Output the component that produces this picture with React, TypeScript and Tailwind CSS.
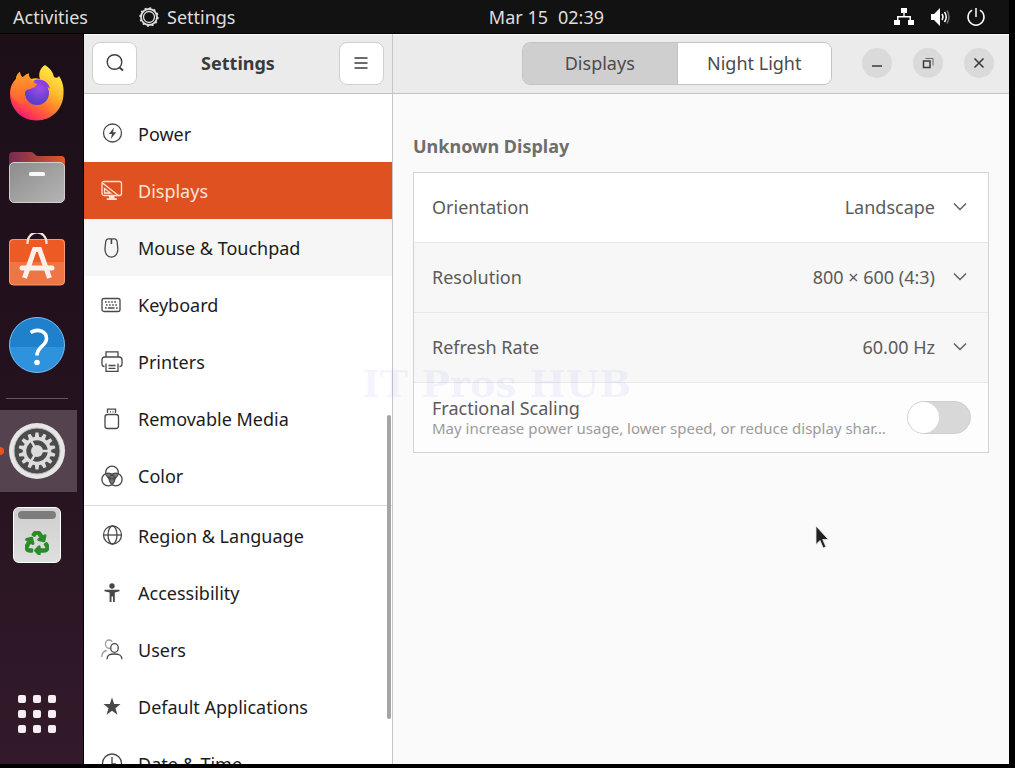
import type { ReactNode } from "react";
import { FaRecycle } from "react-icons/fa";

const iconProps = {
  viewBox: "0 0 22 22",
  className: "size-[22px] shrink-0",
  fill: "none",
  stroke: "currentColor",
  strokeWidth: 1.3,
  "aria-hidden": true,
};

const PowerIcon = () => (
  <svg {...iconProps}>
    <circle cx="11.5" cy="10" r="9" />
    <path d="M13 4.5 7.8 11h3.1l-1 5 5.3-6.7h-3.2z" fill="currentColor" stroke="none" />
  </svg>
);

const DisplaysIcon = () => (
  <svg {...iconProps}>
    <rect x="1" y="1.5" width="19.5" height="14" rx="2" />
    <path d="M1.5 3 17 15.3M3.5 8.5v4.5h6z" />
    <path d="M8 15.5h5.5v2.7h2.3V20H5.8v-1.8H8z" fill="currentColor" stroke="none" />
  </svg>
);

const MouseIcon = () => (
  <svg {...iconProps}>
    <path d="M7.5 1.8h5.8c2 0 2.6 1.2 2.8 3l.7 6.5c.4 5-2.3 8.8-6.4 8.8S3.6 16.3 4 11.3l.7-6.5c.2-1.8.8-3 2.8-3z" />
    <path d="M10.4 2v5" strokeWidth="1.6" />
  </svg>
);

const KeyboardIcon = () => (
  <svg {...iconProps}>
    <rect x="1" y="4.5" width="18" height="13" rx="2" />
    <path d="M4 8h12.500M5 11h11" strokeDasharray="1.6 1.5" />
    <path d="M4 14h1.7M7 14h6.5M15 14h1.7" strokeWidth="1.5" />
  </svg>
);

const PrinterIcon = () => (
  <svg {...iconProps}>
    <path d="M5 6V.8h12V6M3.500 15.500C1.700 15.500 1 14.500 1 13V9c0-2 1-3 3-3h14c2 0 3 1 3 3v4c0 1.500-.7 2.500-2.500 2.500" />
    <path d="M5 12.500V20.300h12v-7.800M7.500 14.500h7M7.500 17.300h7" />
  </svg>
);

const MediaIcon = () => (
  <svg {...iconProps}>
    <rect x="4" y="6.5" width="13.5" height="14" rx="2.5" />
    <path d="M6.500 5V1.200h8V5M9 3.800h1M11.500 3.800h1" />
  </svg>
);

const ColorIcon = () => (
  <svg {...iconProps}>
    <path d="M5.500 8.500h11l-2 6.500-3.500 4-3.500-4z" fill="currentColor" stroke="none" opacity=".75" />
    <circle cx="11" cy="7.500" r="6.300" />
    <circle cx="7.200" cy="14.500" r="6.300" />
    <circle cx="14.800" cy="14.500" r="6.300" />
  </svg>
);

const GlobeIcon = () => (
  <svg {...iconProps}>
    <circle cx="11.5" cy="10" r="9" />
    <ellipse cx="11.5" cy="10" rx="4.5" ry="9" />
    <path d="M2.500 10h18" />
  </svg>
);

const AccessibilityIcon = () => (
  <svg {...iconProps} fill="currentColor" stroke="none">
    <circle cx="11" cy="4" r="2.7" />
    <path d="M3.500 7.700h15v1.500L13.800 10.500V20H12v-5.500h-1.500V20H8.600v-9.500L3.500 9.200z" />
  </svg>
);

const UsersIcon = () => (
  <svg {...iconProps}>
    <g opacity=".55">
      <path d="M9 9.500C5.500 9.500 4.500 6.500 4.500 5c0-2.500 1.500-4 3.500-4 1.500 0 2.500.5 3.200 1.800M.8 18c0-4.500 2-6 5-6.500" />
    </g>
    <ellipse cx="13.5" cy="9" rx="3.8" ry="4.3" />
    <path d="M6 20.300c.3-4.300 2.300-5.300 7.300-5.300s7.400 1 7.700 5.300" />
  </svg>
);

const StarIcon = () => (
  <svg {...iconProps} fill="currentColor" stroke="none">
    <path d="M11 1.500 13.200 8h6.300l-5 4.200 1.900 6.500-5.400-3.900-5.400 3.900 1.900-6.500-5-4.200h6.300z" />
  </svg>
);

const ClockIcon = () => (
  <svg {...iconProps}>
    <circle cx="11" cy="10.500" r="9.500" />
    <path d="M11 4v7h4" />
  </svg>
);

const ChevronIcon = () => (
  <svg viewBox="0 0 16 16" className="pointer-events-none size-4" fill="none" stroke="#5e5c5c" strokeWidth="1.4" aria-hidden="true">
    <path d="m2 4.500 6 6 6-6" />
  </svg>
);

const FirefoxLogo = () => (
  <svg viewBox="0 0 56 56" className="size-14" aria-hidden="true">
    <defs>
      <linearGradient id="ffBody" x1="0.85" y1="0.05" x2="0.25" y2="1">
        <stop offset="0" stopColor="#fff04d" />
        <stop offset="0.35" stopColor="#ffbd2e" />
        <stop offset="0.6" stopColor="#ff7a2a" />
        <stop offset="0.85" stopColor="#ff3a54" />
        <stop offset="1" stopColor="#e3127b" />
      </linearGradient>
      <radialGradient id="ffGlobe" cx="0.6" cy="0.3" r="0.75">
        <stop offset="0" stopColor="#a34bea" />
        <stop offset="1" stopColor="#4a3dc4" />
      </radialGradient>
      <linearGradient id="ffHead" x1="0" y1="0" x2="0" y2="1">
        <stop offset="0" stopColor="#ffa02b" />
        <stop offset="1" stopColor="#ff5a33" />
      </linearGradient>
    </defs>
    <path
      d="M36 0c5 3 8 7 9 12 2 1 4 1 5-1 4 6 5 12 4.500 18C54 44 43 55.500 27.500 55.500S1 43.500 1 29c0-8 3-12 6-15 0-3 2-6 4-7 0 2 1 4 2.500 5.500C16 10 18 9 20 8.500c-.5 2 .5 4 2 5.500 3-1 6-1 9 0-2-5 0-11 5-14z"
      fill="url(#ffBody)"
    />
    <circle cx="28" cy="28" r="12" fill="url(#ffGlobe)" />
    <path d="M24 16c8-4 16 1 17 8-3-3-5-3-7-3-1-3-4-5-10-5z" fill="#8b3fe0" />
    <path
      d="M7 14c0-3 2-6 4-7 0 2 1 4 2.500 5.500C16 10 18 9 20 8.500c-.5 3 1 6 4 8.500l4 2c-1 3-4 4-7 5-5 1-6 4-5 7 1 4 3 6 6 8-8 2-17-1-20-10C1 24 4 18 7 14z"
      fill="url(#ffHead)"
    />
  </svg>
);

const FilesLogo = () => (
  <svg viewBox="0 0 56 56" className="size-14" aria-hidden="true">
    <defs>
      <linearGradient id="flTab" x1="0" y1="0" x2="1" y2="0">
        <stop offset="0" stopColor="#752a55" />
        <stop offset="1" stopColor="#e35826" />
      </linearGradient>
      <linearGradient id="flBody" x1="0" y1="0" x2="1" y2="1">
        <stop offset="0" stopColor="#8c8c8c" />
        <stop offset="1" stopColor="#b5b5b5" />
      </linearGradient>
    </defs>
    <path d="M0 25V7q0-4 4-4h18q2 0 3.500 2t4 2H52q4 0 4 4v16z" fill="url(#flTab)" />
    <rect x="0.5" y="13.500" width="55" height="40" rx="4.5" fill="url(#flBody)" stroke="#cfcfcf" />
    <rect x="20" y="23" width="16" height="4" rx="1.5" fill="#f7f7f7" />
  </svg>
);

const SoftwareLogo = () => (
  <svg viewBox="0 0 56 56" className="size-14" aria-hidden="true">
    <path d="M0 10q0-4 4-4h48q4 0 4 4v19H0z" fill="#ee5a24" />
    <path d="M0 29h56v18q0 5-4 5H4q-4 0-4-5z" fill="#ee7544" />
    <rect x="0.5" y="6.500" width="55" height="45.500" rx="4" fill="none" stroke="#f79a73" />
    <path d="M18.500 11V9.500a9.500 10 0 0 1 19 0V11" fill="none" stroke="#f4e5d8" strokeWidth="2.2" />
    <g fill="none" stroke="#fbf1ea" strokeWidth="5">
      <path d="M26 15 15.500 45M30 15l10.500 30" />
      <path d="M13 35h30" strokeLinecap="round" />
    </g>
    <path d="M24 14h8v5h-8z" fill="#fbf1ea" />
  </svg>
);

const HelpLogo = () => (
  <svg viewBox="0 0 56 56" className="size-14" aria-hidden="true">
    <circle cx="28" cy="28" r="27.5" fill="#2f92dc" />
    <path d="M.5 30V28a27.500 27.500 0 0 1 55 0v2z" fill="#1f80cb" />
    <circle cx="28" cy="28" r="27.5" fill="none" stroke="#79bdf0" />
    <path d="M21.500 15.500c8-4.500 16-1 16 6 0 8-9.500 7.500-9.500 17" fill="none" stroke="#fff" strokeWidth="3.6" />
    <circle cx="28" cy="45.500" r="2.8" fill="#fff" />
  </svg>
);

const gearTeeth = Array.from({ length: 14 }, (_, i) => (i * 360) / 14);

const SettingsLogo = () => (
  <svg viewBox="0 0 56 56" className="size-14" aria-hidden="true">
    <circle cx="28" cy="28" r="28" fill="#e6e6e6" />
    <circle cx="28" cy="28" r="23" fill="#4b4b4b" stroke="#bdbdbd" />
    <g fill="#dcdcdc">
      {gearTeeth.map((angle) => (
        <path key={angle} d="M25.700 15 26.500 9.500h3l.8 5.500z" transform={`rotate(${angle} 28 28)`} />
      ))}
      <circle cx="28" cy="28" r="6" />
    </g>
    <circle cx="28" cy="28" r="12.5" fill="none" stroke="#dcdcdc" strokeWidth="3.5" />
    <path d="M28 28h12M28 28l-6-10.400M28 28l-6 10.400" stroke="#dcdcdc" strokeWidth="2.4" />
  </svg>
);

const TrashLogo = () => (
  <span className="flex h-14 w-12 flex-col items-center rounded-md border border-white bg-gradient-to-b from-[#cfcfcf] to-[#dedede] px-1 pt-[3px]">
    <span className="h-2 w-full rounded-sm bg-[#7d7d7d]" />
    <FaRecycle className="mt-3 size-6 stroke-[#2c8b2a] stroke-[30] text-[#2c8b2a]" />
  </span>
);

interface DockItemProps {
  label: string;
  children: ReactNode;
  active?: boolean;
}

const DockItem = ({ label, children, active }: DockItemProps) => (
  <button type="button" aria-label={label} className="relative flex h-21 w-full items-center py-px">
    {active && <span className="absolute -left-1 size-2 rounded-full bg-[#e95420]" />}
    <span className={`flex h-full items-center justify-center ${active ? "w-[77px] bg-[#5a4853]/90 pr-[3px]" : "w-[74px]"}`}>
      {children}
    </span>
  </button>
);

const Dock = () => (
  <nav
    aria-label="Dock"
    className="flex w-21 shrink-0 flex-col border-r border-black bg-gradient-to-b from-[#1c0f18] via-[#24121e] to-[#331a2a] pt-[17px] pb-2"
  >
    <DockItem label="Firefox"><FirefoxLogo /></DockItem>
    <DockItem label="Files"><FilesLogo /></DockItem>
    <DockItem label="Software"><SoftwareLogo /></DockItem>
    <DockItem label="Help"><HelpLogo /></DockItem>
    <div className="flex h-[22px] w-[74px] items-center justify-center">
      <span className="h-px w-[62px] bg-[#66555f]" />
    </div>
    <DockItem label="Settings" active><SettingsLogo /></DockItem>
    <DockItem label="Trash"><TrashLogo /></DockItem>
    <div className="mt-auto">
      <DockItem label="Show Applications">
        <span className="grid grid-cols-3 gap-[7px]">
          {gearTeeth.slice(0, 9).map((key) => (
            <span key={key} className="size-2 rounded-xs bg-[#f6eef2]" />
          ))}
        </span>
      </DockItem>
    </div>
  </nav>
);

const TopBar = () => (
  <header className="flex h-[34px] shrink-0 items-center border-b border-black bg-[#121212] text-lg leading-6 text-[#dedede]">
    <div className="flex flex-1 items-center gap-[51px] pl-[13px]">
      <button type="button">Activities</button>
      <button type="button" className="flex items-center gap-2">
        <svg viewBox="0 0 20 20" className="size-5" fill="none" stroke="currentColor" aria-hidden="true">
          <circle cx="10" cy="10" r="8" strokeWidth="1.8" />
          <circle cx="10" cy="10" r="8.8" strokeWidth="1.8" strokeDasharray="2 2.6" />
          <circle cx="10" cy="10" r="5.5" strokeWidth="1.3" />
        </svg>
        Settings
      </button>
    </div>
    <button type="button" className="flex gap-[10px]">
      <span>Mar 15</span>
      <span>02:39</span>
    </button>
    <div className="flex w-[405px] shrink-0 justify-end pr-[23px]">
      <button type="button" aria-label="System menu" className="flex items-center gap-4 text-white">
        <svg viewBox="0 0 20 20" className="size-5" fill="currentColor" aria-hidden="true">
          <path d="M7 1h6v5h-2.300v3H17v4h3v5h-6v-5h1.500v-2.500h-11V13H6v5H0v-5h3V9h6.300V6H7z" />
        </svg>
        <svg viewBox="0 0 20 20" className="size-5" fill="currentColor" aria-hidden="true">
          <path d="M1 7h3l6-6v18l-6-6H1z" />
          <g fill="none" stroke="currentColor" strokeWidth="1.5">
            <path d="M12 7q2 3 0 6M14.500 5q3.500 5 0 10" />
            <path d="M17 3.500q4 6.500 0 13" opacity=".4" />
          </g>
        </svg>
        <svg viewBox="0 0 20 20" className="size-5" fill="none" stroke="currentColor" strokeWidth="1.5" aria-hidden="true">
          <path d="M6 3.200a8 8 0 1 0 8 0M10 1v9" />
        </svg>
      </button>
    </div>
  </header>
);

const mainItems = [
  { label: "Power", icon: PowerIcon },
  { label: "Displays", icon: DisplaysIcon },
  { label: "Mouse & Touchpad", icon: MouseIcon },
  { label: "Keyboard", icon: KeyboardIcon },
  { label: "Printers", icon: PrinterIcon },
  { label: "Removable Media", icon: MediaIcon },
  { label: "Color", icon: ColorIcon },
];

const systemItems = [
  { label: "Region & Language", icon: GlobeIcon },
  { label: "Accessibility", icon: AccessibilityIcon },
  { label: "Users", icon: UsersIcon },
  { label: "Default Applications", icon: StarIcon },
  { label: "Date & Time", icon: ClockIcon },
];

const rowStyles: Record<string, string> = {
  Displays: "bg-[#df5121] text-[#fbe3da]",
  "Mouse & Touchpad": "bg-[#f6f6f6] text-[#1c1c1c]",
};

const SidebarRow = ({ label, icon: Icon }: (typeof mainItems)[number]) => (
  <li>
    <a
      href="#"
      aria-current={label === "Displays" ? "page" : undefined}
      className={`flex h-[57px] items-center gap-[15px] pl-[17px] text-lg leading-6 ${rowStyles[label] ?? "text-[#1c1c1c]"}`}
    >
      <span className={label === "Displays" ? "" : "text-[#484848]"}><Icon /></span>
      {label}
    </a>
  </li>
);

const headerButton = "flex h-[43px] w-[45px] items-center justify-center rounded-lg border border-[#cfcfcf] bg-white text-[#3d3d3d]";

const Sidebar = () => (
  <aside className="flex w-[309px] shrink-0 flex-col border-r border-[#c6c6c6] bg-white">
    <div className="flex h-[60px] shrink-0 items-center justify-between border-t border-b border-t-white border-b-[#c2c2c2] bg-[#ebebeb] px-2 pb-0.5">
      <button type="button" aria-label="Search" className={headerButton}>
        <svg viewBox="0 0 20 20" className="size-5" fill="none" stroke="currentColor" strokeWidth="1.4" aria-hidden="true">
          <circle cx="9.5" cy="9" r="7.3" />
          <path d="m14.500 14.500 3.500 3" strokeWidth="2" />
        </svg>
      </button>
      <h1 className="text-lg leading-6 font-bold text-[#3a3a3a]">Settings</h1>
      <button type="button" aria-label="Menu" className={headerButton}>
        <svg viewBox="0 0 20 20" className="size-5" stroke="currentColor" strokeWidth="1.4" aria-hidden="true">
          <path d="M3.500 5h13M3.500 10h13M3.500 15h13" />
        </svg>
      </button>
    </div>
    <div className="relative min-h-0 flex-1 overflow-hidden pt-[11px]">
      <ul>
        {mainItems.map((item) => <SidebarRow key={item.label} {...item} />)}
      </ul>
      <hr className="my-px border-[#dcdcdc]" />
      <ul>
        {systemItems.map((item) => <SidebarRow key={item.label} {...item} />)}
      </ul>
      <span className="absolute right-px bottom-[45px] h-[304px] w-1 rounded-full bg-[#a5a5a5]" />
    </div>
  </aside>
);

const windowButton = "flex size-[30px] items-center justify-center rounded-full bg-[#dadada] text-[#3a3a3a]";

const PanelHeader = () => (
  <div className="flex h-[60px] shrink-0 items-center justify-end border-t border-b border-t-white border-b-[#c2c2c2] bg-[#ebebeb] pr-[15px] pb-0.5 text-lg leading-6 text-[#4c4a4a]">
    <div role="tablist" className="flex h-[43px] w-[310px] overflow-hidden rounded-lg border border-[#c3c3c3]">
      <button type="button" role="tab" aria-selected="true" className="flex-1 border-r border-[#c3c3c3] bg-[#cfcfcf]">
        Displays
      </button>
      <button type="button" role="tab" aria-selected="false" className="flex-1 bg-white">
        Night Light
      </button>
    </div>
    <div className="ml-[30px] flex gap-[21px]">
      <button type="button" aria-label="Minimize" className={windowButton}>
        <svg viewBox="0 0 16 16" className="size-4" stroke="currentColor" strokeWidth="1.5" aria-hidden="true">
          <path d="M3 11h10" />
        </svg>
      </button>
      <button type="button" aria-label="Restore" className={windowButton}>
        <svg viewBox="0 0 16 16" className="size-4" fill="none" stroke="currentColor" aria-hidden="true">
          <rect x="3.5" y="6" width="6.5" height="6.5" strokeWidth="1.5" />
          <path d="M5.500 3.500h7.500v7" strokeWidth="1" opacity=".7" />
        </svg>
      </button>
      <button type="button" aria-label="Close" className={windowButton}>
        <svg viewBox="0 0 16 16" className="size-4" stroke="currentColor" strokeWidth="1.6" aria-hidden="true">
          <path d="m3.500 3.500 9 9M12.500 3.500l-9 9" />
        </svg>
      </button>
    </div>
  </div>
);

interface SelectRowProps {
  id: string;
  label: string;
  value: string;
  shaded?: boolean;
}

const SelectRow = ({ id, label, value, shaded }: SelectRowProps) => (
  <div className={`flex h-[70px] items-center border-b border-[#e8e8e8] pr-5 pb-px pl-[18px] ${shaded ? "bg-[#f7f7f7]" : "bg-white"}`}>
    <label htmlFor={id} className="flex-1">{label}</label>
    <select id={id} className="mr-[17px] appearance-none bg-transparent text-right [text-align-last:right]">
      <option>{value}</option>
    </select>
    <ChevronIcon />
  </div>
);

const DisplayPanel = () => (
  <section className="flex-1 bg-[#fafafa] px-5 pt-10 text-lg leading-6 text-[#5c5a5a]">
    <h2 className="font-bold text-[#6e6e6e]">Unknown Display</h2>
    <div className="mt-[14px] border border-[#d3d3d3]">
      <SelectRow id="orientation" label="Orientation" value="Landscape" />
      <SelectRow id="resolution" label="Resolution" value="800 × 600 (4:3)" shaded />
      <SelectRow id="refresh-rate" label="Refresh Rate" value="60.00 Hz" shaded />
      <div className="flex h-[69px] items-center justify-between bg-[#fdfdfd] pr-[17px] pl-[18px]">
        <label htmlFor="fractional-scaling" className="flex min-w-0 flex-col">
          <span className="leading-5">Fractional Scaling</span>
          <span className="text-[15px] leading-5 whitespace-nowrap text-[#9c9b9b]">
            May increase power usage, lower speed, or reduce display shar…
          </span>
        </label>
        <input
          id="fractional-scaling"
          type="checkbox"
          role="switch"
          className="h-[33px] w-16 shrink-0 appearance-none rounded-full border border-[#cecece] bg-[#d8d8d8] before:block before:size-[31px] before:rounded-full before:bg-white before:content-['']"
        />
      </div>
    </div>
  </section>
);

export default function App() {
  return (
    <div className="relative flex h-screen flex-col overflow-hidden bg-black pr-[6px] pb-1 font-['Noto_Sans','Open_Sans',sans-serif]">
      <TopBar />
      <div className="flex min-h-0 flex-1">
        <Dock />
        <Sidebar />
        <main className="flex min-w-0 flex-1 flex-col">
          <PanelHeader />
          <DisplayPanel />
        </main>
      </div>

      <p className="pointer-events-none absolute top-[372px] left-[362px] font-['DejaVu_Serif',serif] text-[38px] leading-6 font-bold whitespace-nowrap text-[#5a5aff]/8">
        IT Pros HUB
      </p>
      <svg viewBox="0 0 14 24" className="pointer-events-none absolute top-[525px] left-[815px] h-6 w-[14px]" aria-hidden="true">
        <path d="M1 1v18.500l4-4 3.200 7.500 2.700-1.200-3.200-7.300h5.600z" fill="#222" stroke="#e8e8e8" strokeWidth=".8" />
      </svg>
    </div>
  );
}
